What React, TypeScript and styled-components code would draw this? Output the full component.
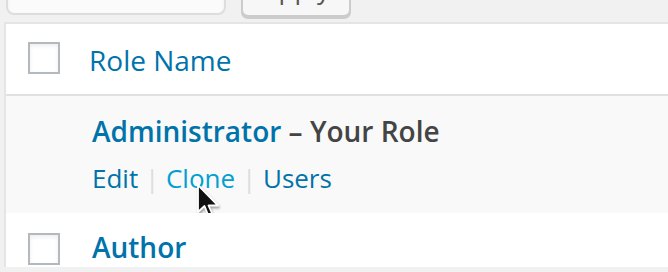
import React, { FC } from 'react'
import styled, { createGlobalStyle } from 'styled-components'

const GlobalStyle = createGlobalStyle`
	html, body {
		margin: 0;
		padding: 0;
		background: #f1f1f1;
		overflow: hidden;
	}

	body {
		font-family: 'Open Sans', 'Liberation Sans', sans-serif;
		color: #444;
	}
`

const Page = styled.div`
	width: 668px;
	height: 272px;
	overflow: hidden;
`

const TableNav = styled.div`
	height: 22px;
	display: flex;
	align-items: flex-end;
	gap: 15px;
	padding-left: 6px;
`

const BulkSelect = styled.div`
	width: 220px;
	height: 56px;
	margin-bottom: 7px;
	box-sizing: border-box;
	background: #fbfbfb;
	border: 2px solid #ddd;
	border-radius: 8px;
	box-shadow: inset 0 2px 4px rgba(0, 0, 0, 0.05);
`

const Button = styled.button`
	width: 110px;
	height: 56px;
	margin-bottom: 5px;
	padding: 0;
	box-sizing: border-box;
	background: #f7f7f7;
	border: 2px solid #ccc;
	border-radius: 7px;
	box-shadow: 0 2px 0 #ccc;
	font-family: 'Open Sans', 'Liberation Sans', sans-serif;
	font-size: 26px;
	line-height: 52px;
	color: #555;
`

const Table = styled.div`
	margin-left: 4px;
	background: #fff;
	border-left: 2px solid #e5e5e5;
	border-top: 2px solid #e5e5e5;
`

const Row = styled.div<{ $striped?: boolean; $head?: boolean }>`
	position: relative;
	display: grid;
	grid-template-columns: 83px 1fr;
	background: ${p => (p.$striped ? '#f9f9f9' : '#fff')};
	border-bottom: ${p => (p.$head ? '2px solid #e1e1e1' : 'none')};
`

const CheckCell = styled.div<{ $top: number }>`
	padding: ${p => p.$top}px 0 0 22px;
`

const Checkbox = styled.span`
	display: block;
	width: 32px;
	height: 32px;
	box-sizing: border-box;
	border: 2px solid #b4b9be;
	background: #fff;
	box-shadow: inset 0 2px 4px rgba(0, 0, 0, 0.07);
`

const TitleCell = styled.div<{ $top: number; $bottom?: number; $indent?: number }>`
	padding: ${p => p.$top}px 0 ${p => p.$bottom ?? 0}px ${p => p.$indent ?? 0}px;
`

const HeadLink = styled.a`
	font-size: 28px;
	line-height: 40px;
	color: #0073aa;
	text-decoration: none;
`

const RowTitle = styled.div`
	font-size: 28px;
	line-height: 40px;
	font-weight: 600;
	color: #444;

	a {
		color: #0073aa;
		text-decoration: none;
	}
`

const RowActions = styled.div`
	margin-top: 9px;
	font-size: 26px;
	line-height: 36px;
	color: #ddd;
`

const Action = styled.a<{ $hover?: boolean }>`
	color: ${p => (p.$hover ? '#00a0d2' : '#0073aa')};
	text-decoration: none;
`

const Cursor = styled.svg`
	position: absolute;
	left: 190px;
	top: 87px;
	width: 26px;
	height: 36px;
	filter: drop-shadow(1px 2px 1px rgba(0, 0, 0, 0.35));
`

const actions = [
	{ label: 'Edit' },
	{ label: 'Clone', hover: true },
	{ label: 'Users' },
]

const App: FC = (): JSX.Element => {
	return (
		<Page>
			<GlobalStyle />
			<TableNav>
				<BulkSelect />
				<Button>Apply</Button>
			</TableNav>

			<Table>
				<Row $head>
					<CheckCell $top={18}>
						<Checkbox />
					</CheckCell>
					<TitleCell $top={16} $bottom={14}>
						<HeadLink>Role Name</HeadLink>
					</TitleCell>
				</Row>

				<Row $striped>
					<CheckCell $top={0} />
					<TitleCell $top={15} $bottom={17} $indent={3}>
						<RowTitle>
							<a>Administrator</a> – Your Role
						</RowTitle>
						<RowActions>
							{actions.map((action, i) => (
								<span key={action.label}>
									<Action $hover={action.hover}>{action.label}</Action>
									{i < actions.length - 1 && ' | '}
								</span>
							))}
						</RowActions>
					</TitleCell>
					<Cursor viewBox='0 0 26 36'>
						<path
							d='M2 2 L2 29 L8.5 23 L12.5 33 L16.5 31.5 L12.5 22.5 L22 22.5 Z'
							fill='#111'
							stroke='#fff'
							strokeWidth='1.8'
							strokeLinejoin='round'
						/>
					</Cursor>
				</Row>

				<Row>
					<CheckCell $top={20}>
						<Checkbox />
					</CheckCell>
					<TitleCell $top={14} $indent={3}>
						<RowTitle>
							<a>Author</a>
						</RowTitle>
					</TitleCell>
				</Row>
			</Table>
		</Page>
	)
}

export default App
